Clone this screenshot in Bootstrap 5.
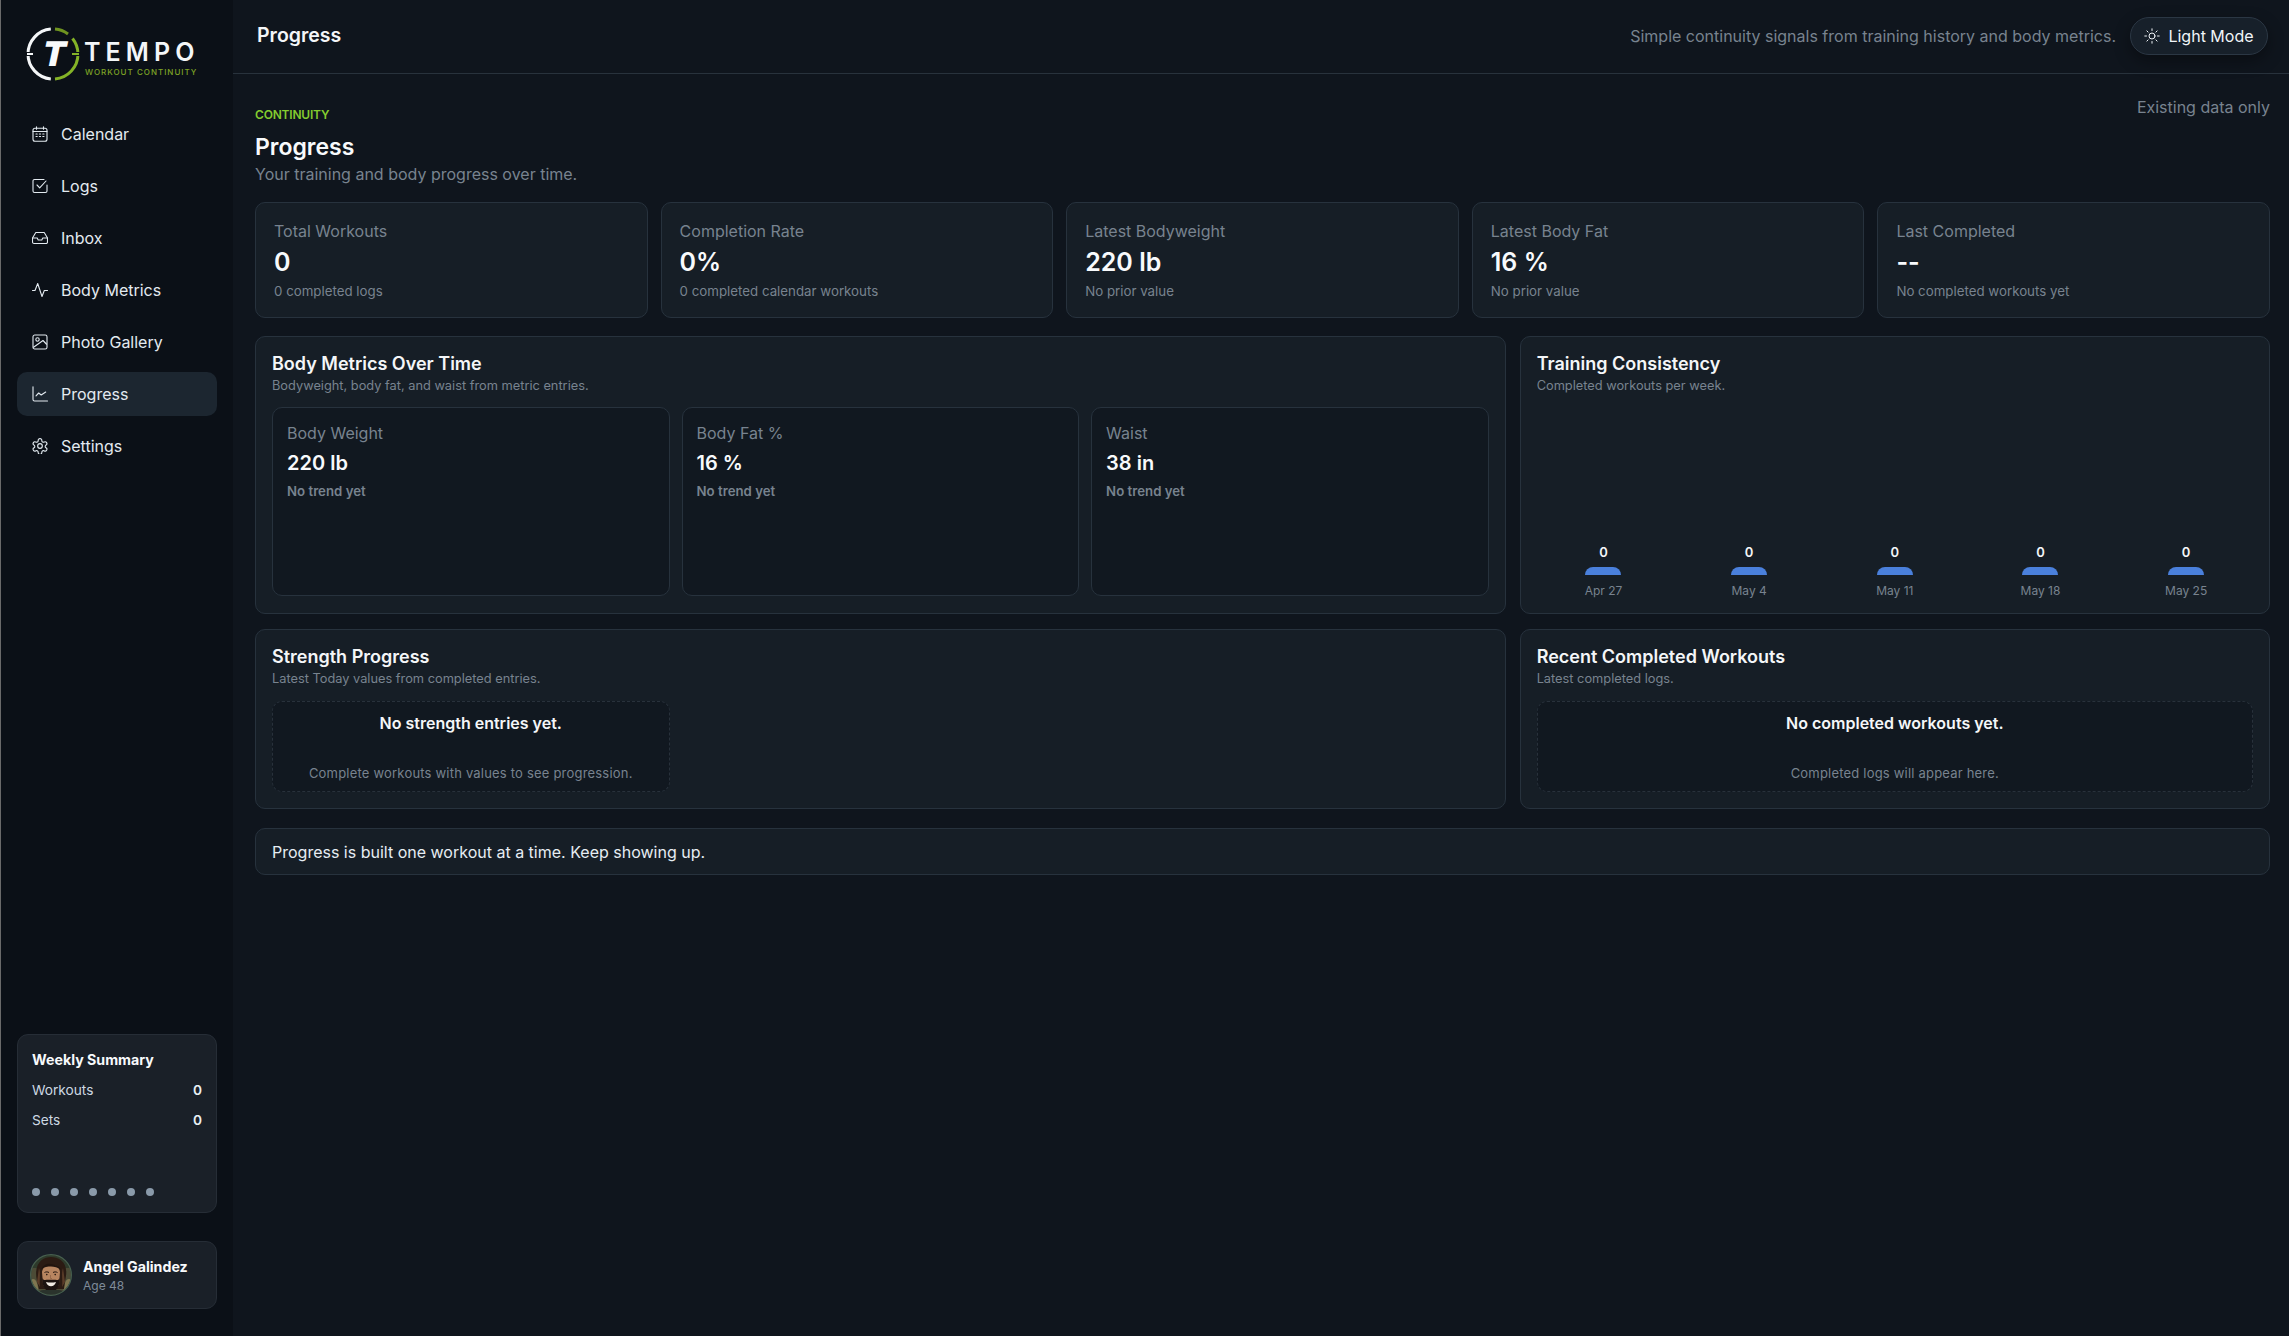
<!doctype html>
<html lang="en">
<head>
<meta charset="utf-8">
<title>Progress</title>
<link href="https://cdn.jsdelivr.net/npm/bootstrap@5.3.0/dist/css/bootstrap.min.css" rel="stylesheet">
<style>
html,body{height:100%;}
body{background:#0f151d;color:#f1f5f9;font-family:Inter,"Noto Sans",sans-serif;font-size:16px;overflow:hidden;}
.app-shell{height:1336px;}
.main-col{min-width:0;}
.side-rail{width:233px;flex:none;background:#0b1017;border-left:1px solid #6a6a6a;padding:0 16px 27px 16px;}
.brand-box{height:112px;flex:none;}
.brand-ring{width:54px;height:54px;position:absolute;left:9px;top:27px;}
.brand-name{position:absolute;left:67px;top:37px;font-size:25px;line-height:30px;font-weight:600;letter-spacing:5.1px;color:#f4f6f8;white-space:nowrap;}
.brand-tag{position:absolute;left:68px;top:67px;font-size:8px;line-height:10px;font-weight:500;letter-spacing:1px;color:#7ea325;white-space:nowrap;}
.rail-link{height:44px;border-radius:10px;padding:0 15px;gap:13px;color:#e3eaf0;font-size:16px;text-decoration:none;}
.rail-link svg{width:16px;height:16px;flex:none;}
.rail-link.is-on{background:#1c2630;}
.rail-nav{gap:8px;}
.week-box{height:179px;background:#1a2028;border:1px solid #262d36;border-radius:11px;padding:15px 14px 16px 14px;margin-bottom:28px;font-size:13.7px;line-height:20px;}
.week-title{font-size:14.2px;font-weight:700;color:#f8fafc;margin-bottom:5px;}
.week-row{height:30px;color:#cdd9e3;}
.week-row b{font-weight:600;color:#e9eff4;}
.gap-week{gap:11px;}
.week-dot{display:block;width:8px;height:8px;flex:none;border-radius:50%;background:#8a9aaa;}
.who-box{height:68px;background:#1a2028;border:1px solid #262d36;border-radius:11px;padding:0 12px;gap:11px;}
.who-pic{width:42px;height:42px;flex:none;}
.who-text{padding-top:2px;}
.who-name{font-size:14.2px;line-height:19px;font-weight:700;color:#f8fafc;}
.who-age{font-size:12px;line-height:20px;color:#7f8b98;}
.top-strip{height:74px;flex:none;border-bottom:1px solid #28323c;padding:0 21px 2px 24px;}
.top-title{font-size:19.5px;font-weight:600;color:#f4f6f8;margin-top:1px;}
.top-note{color:#78838f;font-size:16px;margin-right:14px;}
.mode-btn{height:38px;width:138px;border-radius:19px;background:#17202a;border:1px solid #2b3744;color:#f1f5f9;font-size:16px;gap:8px;box-shadow:0 6px 16px rgba(0,0,0,.35);padding:0;}
.mode-btn svg{width:16px;height:16px;}
.page-body{padding:21px 19px 0 22px;}
.eye-brow{margin-top:12px;font-size:12px;line-height:16px;font-weight:600;color:#84cc2f;letter-spacing:-.2px;margin-bottom:9px;}
.page-h{font-size:23px;line-height:30px;font-weight:600;color:#f8fafc;margin:0;}
.page-sub{line-height:24px;color:#78838f;}
.data-note{line-height:24px;color:#78838f;}
.stat-grid{display:grid;grid-template-columns:repeat(5,1fr);gap:13px;margin-top:16px;margin-bottom:18px;}
.pane{background:#161e26;border:1px solid #27323d;border-radius:10px;}
.stat-pane{height:116px;padding:16px 18px;}
.stat-label{line-height:24px;color:#78838f;}
.stat-val{font-size:25px;line-height:36px;margin-top:1px;font-weight:600;color:#f8fafc;}
.stat-sub{font-size:13.3px;line-height:20px;margin-top:1px;color:#78838f;}
.duo-grid{display:grid;grid-template-columns:5fr 3fr;column-gap:14px;row-gap:15px;}
.tall-pane{height:278px;padding:16px;}
.low-pane{height:180px;padding:16px;}
.pane-h{font-size:18px;line-height:22px;font-weight:600;color:#f4f6f8;}
.pane-sub{font-size:12.8px;line-height:21px;color:#78838f;margin-bottom:11px;}
.low-pane .pane-sub{margin-bottom:12px;}
.tri-grid{display:grid;grid-template-columns:repeat(3,1fr);gap:12px;}
.metric-box{height:189px;background:#111820;border:1px solid #27323d;border-radius:10px;padding:13px 14px;}
.metric-label{line-height:24px;color:#78838f;}
.metric-val{font-size:20px;line-height:30px;margin-top:3px;font-weight:600;color:#f8fafc;}
.metric-note{font-size:13.25px;line-height:20px;margin-top:3px;font-weight:600;color:#78838f;}
.bars-wrap{height:204px;gap:12px;}
.bar-col{flex:1 1 0;}
.bar-num{font-size:13px;line-height:18px;font-weight:600;color:#f4f6f8;margin-bottom:6px;}
.bar-fill{width:36px;height:8px;background:#4a80dc;border-radius:8px 8px 0 0;}
.bar-day{font-size:12px;line-height:18px;margin-top:7px;color:#78838f;}
.void-box{height:91px;background:#111820;border:1px dashed #28313b;border-radius:10px;padding:10px 8px 8px;text-align:center;}
.void-h{font-weight:600;line-height:22px;color:#f4f6f8;}
.void-sub{font-size:13px;letter-spacing:.2px;line-height:20px;margin-top:auto;color:#78838f;}
.foot-pane{height:47px;margin-top:19px;padding:0 16px;color:#e6edf3;}
</style>
</head>
<body>
<div class="app-shell d-flex">
  <aside class="side-rail d-flex flex-column">
    <div class="brand-box position-relative">
      <svg class="brand-ring" viewBox="0 0 54 54" fill="none" aria-hidden="true">
        <g stroke-width="3" fill="none">
          <path d="M24.800 2.100A25 25 0 0 0 2 27A25 25 0 0 0 24.800 51.900" stroke="#f4f6f8"/>
          <path d="M29 2.100A25 25 0 0 1 42 7" stroke="#6f9420"/>
          <path d="M46.500 11.500A25 25 0 0 1 52 27A25 25 0 0 1 29 51.900" stroke="#84b327"/>
          <path d="M0 27h7" stroke="#0b1017" stroke-width="4"/>
          <path d="M1 27h6" stroke="#f4f6f8" stroke-width="2"/>
          <path d="M46 27h8" stroke="#0b1017" stroke-width="4"/>
          <path d="M46 27h7" stroke="#84b327" stroke-width="2"/>
        </g>
        <text x="27" y="39.500" text-anchor="middle" font-family="Inter,sans-serif" font-weight="900" font-size="34" fill="#f8fafc" transform="skewX(-12) translate(7.500 0)">T</text>
      </svg>
      <div class="brand-name">TEMPO</div>
      <div class="brand-tag">WORKOUT CONTINUITY</div>
    </div>
    <nav class="rail-nav d-flex flex-column">
      <a class="rail-link d-flex align-items-center" href="#"><svg viewBox="0 0 16 16" fill="none" stroke="currentColor" stroke-width="1.100" stroke-linecap="round"><rect x="1" y="2.200" width="14" height="13" rx="2"/><path d="M1 5.500h14M4.500 .8v2.500M11.500 .8v2.500"/><path d="M4 8h1.200M7.400 8h1.200M10.800 8h1.200M4 10.500h1.200M7.400 10.500h1.200M10.800 10.500h1.200"/></svg>Calendar</a>
      <a class="rail-link d-flex align-items-center" href="#"><svg viewBox="0 0 16 16" fill="none" stroke="currentColor" stroke-width="1.100" stroke-linecap="round" stroke-linejoin="round"><path d="M12 1.500H2.500A1.500 1.500 0 0 0 1 3v10a1.500 1.500 0 0 0 1.500 1.500h11A1.500 1.500 0 0 0 15 13V7"/><path d="M5 7l2.700 2.800L14 3"/></svg>Logs</a>
      <a class="rail-link d-flex align-items-center" href="#"><svg viewBox="0 0 16 16" fill="none" stroke="currentColor" stroke-width="1.100" stroke-linejoin="round"><path d="M3.800 2.500h8.400L15.500 8v4a1.500 1.500 0 0 1-1.500 1.500H2A1.500 1.500 0 0 1 .5 12V8z"/><path d="M.5 8H5.200l1 2h3.600l1-2h4.700"/></svg>Inbox</a>
      <a class="rail-link d-flex align-items-center" href="#"><svg viewBox="0 0 16 16" fill="none" stroke="currentColor" stroke-width="1.100" stroke-linecap="round" stroke-linejoin="round"><path d="M.5 8.500H3L5.700 1.500 10 14.500l2.300-6h3.200"/></svg>Body Metrics</a>
      <a class="rail-link d-flex align-items-center" href="#"><svg viewBox="0 0 16 16" fill="none" stroke="currentColor" stroke-width="1.100" stroke-linejoin="round"><rect x="1" y="1" width="14" height="14" rx="1.800"/><circle cx="5.500" cy="5.500" r="1.700"/><path d="M1.200 13.500 11 6.500l3.800 4"/></svg>Photo Gallery</a>
      <a class="rail-link is-on d-flex align-items-center" href="#"><svg viewBox="0 0 16 16" fill="none" stroke="currentColor" stroke-width="1.100" stroke-linecap="round" stroke-linejoin="round"><path d="M1 .8v12.700a1.500 1.500 0 0 0 1.500 1.500H15.500"/><path d="M4 9.800 6.700 7l2.500 2 4.500-3"/></svg>Progress</a>
      <a class="rail-link d-flex align-items-center" href="#"><svg viewBox="0 0 24 24" fill="none" stroke="currentColor" stroke-width="1.700" stroke-linecap="round" stroke-linejoin="round"><path d="M12.220 1h-.44a2.500 2.500 0 0 0-2.500 2.500v.68a2 2 0 0 1-1 1.730l-.43.250a2 2 0 0 1-2 0l-.35-.18a2.500 2.500 0 0 0-3.330.930l-.22.380a2.500 2.500 0 0 0 .930 3.330l.25.100a2 2 0 0 1 1 1.720v.510a2 2 0 0 1-1 1.740l-.25.090a2.500 2.500 0 0 0-.930 3.330l.22.380a2.500 2.500 0 0 0 3.330.930l.35-.18a2 2 0 0 1 2 0l.43.250a2 2 0 0 1 1 1.730v.68a2.500 2.500 0 0 0 2.500 2.500h.44a2.500 2.500 0 0 0 2.500-2.500v-.68a2 2 0 0 1 1-1.730l.43-.25a2 2 0 0 1 2 0l.35.180a2.500 2.500 0 0 0 3.330-.930l.22-.39a2.500 2.500 0 0 0-.930-3.330l-.25-.08a2 2 0 0 1-1-1.740v-.5a2 2 0 0 1 1-1.740l.25-.09a2.500 2.500 0 0 0 .930-3.330l-.22-.38a2.500 2.500 0 0 0-3.330-.930l-.35.180a2 2 0 0 1-2 0l-.43-.25a2 2 0 0 1-1-1.730v-.68a2.500 2.500 0 0 0-2.500-2.500z"/><circle cx="12" cy="12" r="3.500"/></svg>Settings</a>
    </nav>
    <div class="week-box d-flex flex-column mt-auto">
      <div class="week-title">Weekly Summary</div>
      <div class="week-row d-flex justify-content-between align-items-center"><span>Workouts</span><b>0</b></div>
      <div class="week-row d-flex justify-content-between align-items-center"><span>Sets</span><b>0</b></div>
      <div class="d-flex mt-auto gap-week"><span class="week-dot"></span><span class="week-dot"></span><span class="week-dot"></span><span class="week-dot"></span><span class="week-dot"></span><span class="week-dot"></span><span class="week-dot"></span></div>
    </div>
    <div class="who-box d-flex align-items-center">
      <svg class="who-pic" viewBox="0 0 42 42" aria-label="Angel Galindez">
        <defs><clipPath id="avatarClip"><circle cx="21" cy="21" r="20"/></clipPath></defs>
        <g clip-path="url(#avatarClip)">
          <rect width="42" height="42" fill="#4c4b36"/>
          <path d="M0 0h42v14H0z" fill="#2e3a2b"/>
          <path d="M0 26c5-3 8 0 9 16H0zM42 26c-5-3-8 0-9 16h9z" fill="#7f7650"/>
          <path d="M7 27C3 9 13 3 21 3s19 5 14 24l-1 8H9z" fill="#2b1b13"/>
          <path d="M9 14c2 6 0 12 1 19l-3-5zM33 14c-2 6 0 12-1 19l3-5z" fill="#5a3c28"/>
          <path d="M12 18c1-6 5-7 9-7s8 1 9 7l-1 12c-2 5-5 7-8 7s-6-2-8-7z" fill="#b88560"/>
          <path d="M11 15c3-5 7-6 10-5s8 1 10 6c-3-3-7-3.500-10-3.500S14 13 11 15z" fill="#21140e"/>
          <path d="M12.500 24c1 3 3.500 1.800 5.500 1.800h6c2 0 4.500 1.200 5.500-1.800 1 7-3 14-8.500 14S11.500 31 12.500 24z" fill="#1c1310"/>
          <path d="M16 28c3 .8 7 .8 10 0-1 3.200-2.800 4.300-5 4.300s-4-1.100-5-4.300z" fill="#f2ece4"/>
          <path d="M14.500 18.500c1.500-.8 3-.8 4.500 0M23 18.500c1.500-.8 3-.8 4.500 0" stroke="#21140e" stroke-width="1" fill="none"/>
          <circle cx="16.800" cy="20.600" r=".8" fill="#20130d"/><circle cx="25.200" cy="20.600" r=".8" fill="#20130d"/>
          <path d="M20.500 21v3.500h1.500" stroke="#8a5f42" stroke-width=".7" fill="none"/>
          <path d="M4 42c1-4 6-6 11-6h12c5 0 10 2 11 6z" fill="#2a332c"/>
        </g>
        <circle cx="21" cy="21" r="20.400" fill="none" stroke="#47604f" stroke-width="1.200"/>
      </svg>
      <div class="who-text">
        <div class="who-name">Angel Galindez</div>
        <div class="who-age">Age 48</div>
      </div>
    </div>
  </aside>

  <main class="flex-grow-1 d-flex flex-column main-col">
    <header class="top-strip d-flex align-items-center justify-content-between">
      <div class="top-title">Progress</div>
      <div class="d-flex align-items-center">
        <span class="top-note">Simple continuity signals from training history and body metrics.</span>
        <button class="mode-btn btn d-flex align-items-center justify-content-center" type="button"><svg viewBox="0 0 16 16" fill="none" stroke="currentColor" stroke-linecap="round"><circle cx="8" cy="8" r="3"/><path d="M8 .8v1.700M8 13.500v1.700M.8 8h1.700M13.500 8h1.700M2.900 2.900l1.200 1.200M11.900 11.900l1.200 1.200M2.900 13.100l1.200-1.200M11.900 4.100l1.200-1.200"/></svg>Light Mode</button>
      </div>
    </header>
    <div class="page-body">
      <div class="d-flex justify-content-between align-items-start">
        <div>
          <div class="eye-brow">CONTINUITY</div>
          <h1 class="page-h">Progress</h1>
          <div class="page-sub">Your training and body progress over time.</div>
        </div>
        <div class="data-note">Existing data only</div>
      </div>
      <div class="stat-grid">
        <div class="pane stat-pane"><div class="stat-label">Total Workouts</div><div class="stat-val">0</div><div class="stat-sub">0 completed logs</div></div>
        <div class="pane stat-pane"><div class="stat-label">Completion Rate</div><div class="stat-val">0%</div><div class="stat-sub">0 completed calendar workouts</div></div>
        <div class="pane stat-pane"><div class="stat-label">Latest Bodyweight</div><div class="stat-val">220 lb</div><div class="stat-sub">No prior value</div></div>
        <div class="pane stat-pane"><div class="stat-label">Latest Body Fat</div><div class="stat-val">16 %</div><div class="stat-sub">No prior value</div></div>
        <div class="pane stat-pane"><div class="stat-label">Last Completed</div><div class="stat-val">--</div><div class="stat-sub">No completed workouts yet</div></div>
      </div>
      <div class="duo-grid">
        <section class="pane tall-pane">
          <div class="pane-h">Body Metrics Over Time</div>
          <div class="pane-sub">Bodyweight, body fat, and waist from metric entries.</div>
          <div class="tri-grid">
            <div class="metric-box"><div class="metric-label">Body Weight</div><div class="metric-val">220 lb</div><div class="metric-note">No trend yet</div></div>
            <div class="metric-box"><div class="metric-label">Body Fat %</div><div class="metric-val">16 %</div><div class="metric-note">No trend yet</div></div>
            <div class="metric-box"><div class="metric-label">Waist</div><div class="metric-val">38 in</div><div class="metric-note">No trend yet</div></div>
          </div>
        </section>
        <section class="pane tall-pane">
          <div class="pane-h">Training Consistency</div>
          <div class="pane-sub mb-0">Completed workouts per week.</div>
          <div class="bars-wrap d-flex align-items-end">
            <div class="bar-col d-flex flex-column align-items-center"><div class="bar-num">0</div><div class="bar-fill"></div><div class="bar-day">Apr 27</div></div>
            <div class="bar-col d-flex flex-column align-items-center"><div class="bar-num">0</div><div class="bar-fill"></div><div class="bar-day">May 4</div></div>
            <div class="bar-col d-flex flex-column align-items-center"><div class="bar-num">0</div><div class="bar-fill"></div><div class="bar-day">May 11</div></div>
            <div class="bar-col d-flex flex-column align-items-center"><div class="bar-num">0</div><div class="bar-fill"></div><div class="bar-day">May 18</div></div>
            <div class="bar-col d-flex flex-column align-items-center"><div class="bar-num">0</div><div class="bar-fill"></div><div class="bar-day">May 25</div></div>
          </div>
        </section>
        <section class="pane low-pane">
          <div class="pane-h">Strength Progress</div>
          <div class="pane-sub">Latest Today values from completed entries.</div>
          <div class="tri-grid">
            <div class="void-box d-flex flex-column"><div class="void-h">No strength entries yet.</div><div class="void-sub">Complete workouts with values to see progression.</div></div>
          </div>
        </section>
        <section class="pane low-pane">
          <div class="pane-h">Recent Completed Workouts</div>
          <div class="pane-sub">Latest completed logs.</div>
          <div class="void-box d-flex flex-column"><div class="void-h">No completed workouts yet.</div><div class="void-sub">Completed logs will appear here.</div></div>
        </section>
      </div>
      <div class="pane foot-pane d-flex align-items-center">Progress is built one workout at a time. Keep showing up.</div>
    </div>
  </main>
</div>
<script src="https://cdn.jsdelivr.net/npm/bootstrap@5.3.0/dist/js/bootstrap.bundle.min.js"></script>
</body>
</html>
